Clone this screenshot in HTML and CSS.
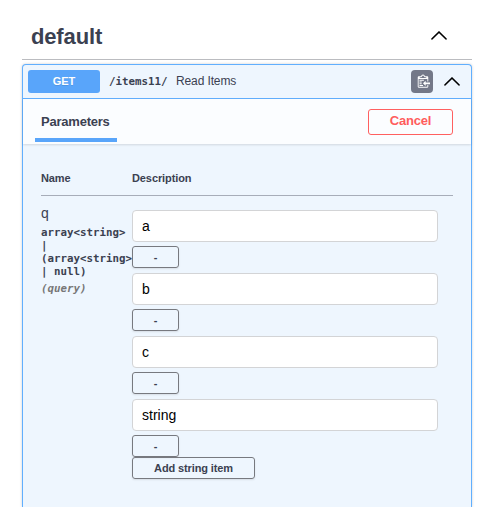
FILE: index.html
```html
<!DOCTYPE html>
<html lang="en">
<head>
<meta charset="utf-8">
<title>API docs</title>
<link rel="stylesheet" href="styles.css">
</head>
<body>
<main class="section">
  <header class="tag">
    <h3 class="tag-name">default</h3>
    <svg class="arrow" viewBox="0 0 20 20"><path d="M17.418 14.908c.272.268.709.268.979 0s.271-.701 0-.969l-7.908-7.83c-.27-.268-.707-.268-.979 0l-7.908 7.83c-.27.268-.27.701 0 .969.271.268.709.268.979 0L10 7.767l7.418 7.141z"/></svg>
  </header>
  <article class="operation">
    <div class="summary">
      <span class="method">GET</span>
      <span class="path">/items11/</span>
      <span class="title">Read Items</span>
      <button class="copy" aria-label="Copy">
        <svg viewBox="0 0 16 16"><path d="M4 12h4v1H4v-1zm5-6H4v1h5V6zm2 3V7l-3 3 3 3v-2h5V9h-5zM6.5 8H4v1h2.500V8zM4 11h2.500v-1H4v1zm9 1h1v2c-.02.28-.11.52-.3.7-.19.18-.42.28-.7.3H3c-.55 0-1-.45-1-1V3c0-.55.45-1 1-1h3c0-1.110.89-2 2-2 1.110 0 2 .89 2 2h3c.55 0 1 .45 1 1v5h-1V5H3v9h10v-2zM4 4h8c0-.55-.45-1-1-1h-1c-.55 0-1-.45-1-1s-.45-1-1-1-1 .45-1 1-.45 1-1 1H5c-.55 0-1 .45-1 1z"/></svg>
      </button>
      <svg class="arrow" viewBox="0 0 20 20"><path d="M17.418 14.908c.272.268.709.268.979 0s.271-.701 0-.969l-7.908-7.830c-.27-.268-.707-.268-.979 0l-7.908 7.830c-.27.268-.27.701 0 .969.271.268.709.268.979 0L10 7.767l7.418 7.141z"/></svg>
    </div>
    <div class="tabs">
      <h4 class="tab">Parameters</h4>
      <button class="cancel">Cancel</button>
    </div>
    <div class="params">
      <div class="row head">
        <span>Name</span>
        <span>Description</span>
      </div>
      <div class="row">
        <div class="info">
          <div class="name">q</div>
          <div class="type">array&lt;string&gt; |<br>(array&lt;string&gt; | null)</div>
          <div class="in">(query)</div>
        </div>
        <div class="items">
          <input class="field" type="text" value="a">
          <button class="btn remove">-</button>
          <input class="field" type="text" value="b">
          <button class="btn remove">-</button>
          <input class="field" type="text" value="c">
          <button class="btn remove">-</button>
          <input class="field" type="text" value="string">
          <button class="btn remove">-</button>
          <button class="btn add">Add string item</button>
        </div>
      </div>
    </div>
  </article>
</main>
</body>
</html>
```
FILE: styles.css
```css
* {
  box-sizing: border-box;
}

body {
  margin: 0;
  background: #fff;
  color: #3b4151;
  font-family: "Liberation Sans", Arial, sans-serif;
}

button,
input {
  font-family: inherit;
}

.section {
  width: 450px;
  margin-left: 22px;
  padding-top: 14px;
}

.tag {
  display: flex;
  align-items: center;
  justify-content: space-between;
  height: 46px;
  padding: 0 24px 0 9px;
  border-bottom: 1px solid #bbbcc0;
}

.tag-name {
  margin: 0;
  font-size: 22px;
  letter-spacing: -.15px;
  line-height: 28px;
}

.arrow {
  flex: none;
  width: 18px;
  height: 18px;
  fill: #000;
  stroke: #000;
  stroke-width: .3;
}

.tag .arrow {
  margin-bottom: 4px;
}

.operation {
  height: 443px;
  margin-top: 4px;
  border: 1px solid #61affe;
  border-bottom: 0;
  border-radius: 4px 4px 0 0;
  background: #eef6fe;
  box-shadow: 0 0 3px rgba(0, 0, 0, .19);
}

.summary {
  display: flex;
  align-items: center;
  height: 34px;
  padding: 0 10px 0 5px;
  border-bottom: 1px solid #61affe;
}

.summary .arrow {
  margin-bottom: 2px;
}

.method {
  width: 72px;
  height: 23px;
  border-radius: 3px;
  background: #59a5fa;
  color: #fff;
  font-size: 11px;
  font-weight: 700;
  line-height: 23px;
  text-align: center;
  text-shadow: 0 1px 0 rgba(0, 0, 0, .1);
}

.path {
  width: 67px;
  margin-left: 9px;
  font: 700 10.8px "DejaVu Sans Mono", monospace;
}

.title {
  flex: 1;
  padding-bottom: 1px;
  font-size: 12px;
  letter-spacing: -.12px;
}

.copy {
  display: flex;
  align-items: center;
  justify-content: center;
  width: 22px;
  height: 23px;
  margin-right: 10px;
  padding: 0 0 1px 1px;
  border: 0;
  border-radius: 4px;
  background: #737888;
}

.copy svg {
  width: 14px;
  height: 15px;
  fill: #fff;
}

.tabs {
  display: flex;
  align-items: center;
  justify-content: space-between;
  height: 45px;
  padding: 0 18px 0 12px;
  background: #fbfdff;
  box-shadow: 0 1px 2px rgba(0, 0, 0, .12);
}

.tab {
  align-self: flex-end;
  width: 82px;
  height: 38px;
  margin: 0 0 2px;
  padding: 10px 0 0 6px;
  border-bottom: 4px solid #59a5fa;
  font-size: 13px;
  letter-spacing: -.22px;
  line-height: 16px;
}

.cancel {
  width: 85px;
  height: 26px;
  padding: 0 0 2px;
  border: 1px solid #ff6060;
  border-radius: 3px;
  background: transparent;
  color: #ff5c5c;
  font-size: 13px;
  font-weight: 700;
  letter-spacing: -.2px;
}

.params {
  padding: 21px 18px 0;
}

.row {
  display: grid;
  grid-template-columns: 91px 1fr;
}

.head {
  height: 31px;
  border-bottom: 1px solid #a7adb9;
  font-size: 11px;
  font-weight: 700;
  letter-spacing: -.1px;
  line-height: 26px;
}

.info {
  padding-top: 8px;
}

.name {
  font-size: 14px;
  line-height: 18px;
}

.type {
  padding-top: 4px;
  font: 700 10.8px/13px "DejaVu Sans Mono", monospace;
}

.in {
  padding-top: 4px;
  color: #777;
  font: italic 700 10.8px/14px "DejaVu Sans Mono", monospace;
}

.items {
  display: flex;
  flex-direction: column;
  align-items: flex-start;
  padding-top: 14px;
}

.field {
  width: 306px;
  height: 32px;
  margin-bottom: 4px;
  padding: 0 9px;
  border: 1px solid #d3d4d6;
  border-radius: 4px;
  background: #fff;
  color: #000;
  font-size: 14px;
}

.btn {
  height: 22px;
  padding: 0;
  border: 1px solid #77797f;
  border-radius: 3px;
  background: transparent;
  color: #3b4151;
  box-shadow: 0 1px 2px rgba(0, 0, 0, .1);
  font-size: 11px;
  font-weight: 700;
  letter-spacing: -.12px;
}

.remove {
  width: 47px;
}

.remove + .field {
  margin-top: 5px;
}

.add {
  width: 123px;
}
```
